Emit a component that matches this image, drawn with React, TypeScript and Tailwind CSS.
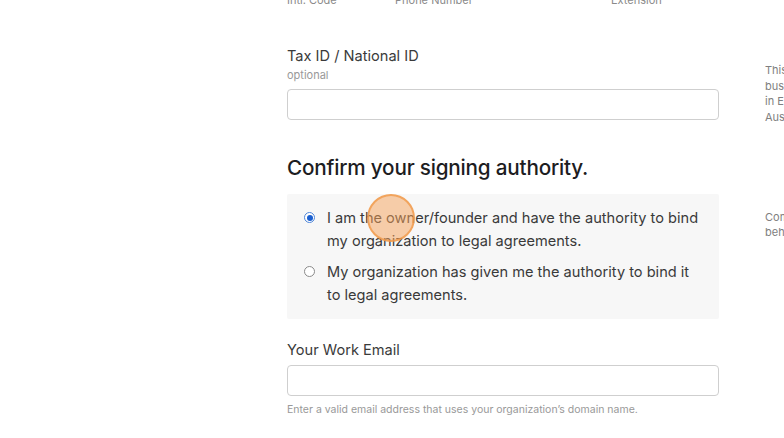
import React from "react";

export default function App() {
  const font = { fontFamily: "Inter, 'Liberation Sans', sans-serif" };
  return (
    <div className="relative w-[784px] h-[438px] overflow-hidden bg-white" style={font}>
      <div className="flex">
        <div className="w-[287px] shrink-0" />
        <div className="w-[432px] shrink-0 flex flex-col">
          <div className="flex mt-[-7px] text-[11px] leading-[14px] text-[#8a8a8a]">
            <div className="w-[108px]">Intl. Code</div>
            <div className="w-[216px]">Phone Number</div>
            <div>Extension</div>
          </div>
          <div className="mt-[39px] text-[14.6px] leading-[20px] text-[#3a3a3a]">Tax ID / National ID</div>
          <div className="mt-[3px] text-[11px] leading-[13px] text-[#999]">optional</div>
          <div className="mt-[7px] h-[31px] rounded-[4px] border border-[#cfcfcf] bg-white" />
          <div className="mt-[35px] text-[20.7px] leading-[26px] font-medium text-[#1d1d1f] tracking-[-0.2px]">
            Confirm your signing authority.
          </div>
          <div className="mt-[13px] bg-[#f7f7f7] rounded-[2px] pt-[13px] pb-[12px] pl-[17px] pr-[18px] flex flex-col gap-[8px] text-[14.6px] leading-[23px] text-[#3a3a3a]">
            <div className="flex items-start">
              <div className="mt-[5px] w-[11px] h-[11px] rounded-full border border-[#4f86d8] bg-white flex items-center justify-center shrink-0">
                <div className="w-[6px] h-[6px] rounded-full bg-[#1a5fd0]" />
              </div>
              <div className="ml-[12px]">I am the owner/founder and have the authority to bind my organization to legal agreements.</div>
            </div>
            <div className="flex items-start">
              <div className="mt-[5px] w-[11px] h-[11px] rounded-full border border-[#8a8a8a] bg-white shrink-0" />
              <div className="ml-[12px]">My organization has given me the authority to bind it to legal agreements.</div>
            </div>
          </div>
          <div className="mt-[21px] text-[14.6px] leading-[20px] text-[#3a3a3a]">Your Work Email</div>
          <div className="mt-[5px] h-[31px] rounded-[4px] border border-[#cfcfcf] bg-white" />
          <div className="mt-[7px] text-[10.5px] leading-[14px] text-[#999]">
            Enter a valid email address that uses your organization’s domain name.
          </div>
        </div>
        <div className="ml-[46px] w-[200px] shrink-0 text-[11px] leading-[15.5px] text-[#808080]">
          <div className="mt-[63px]">This<br />bus<br />in E<br />Aus</div>
          <div className="mt-[85px] leading-[15px]">Com<br />beh</div>
        </div>
      </div>
      <div className="absolute left-[367px] top-[194px] w-[48px] h-[48px] rounded-full bg-[#f6a25a]/50 border-2 border-[#f19a4a]/80" />
    </div>
  );
}
